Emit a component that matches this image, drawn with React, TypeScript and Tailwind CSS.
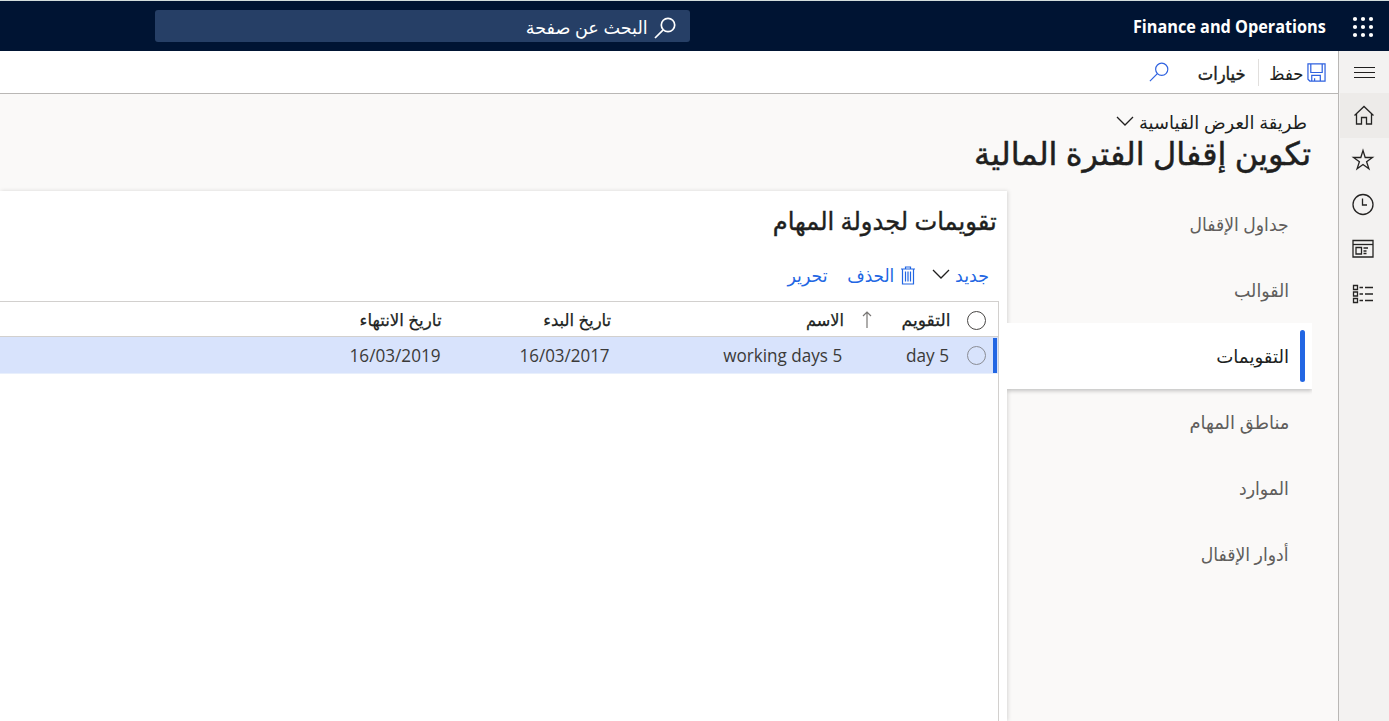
import React, { useLayoutEffect, useRef, useState } from 'react';

/* Single line label that is condensed or widened to fill the width of its box. */
function Label({ className = '', ltr = false, children }: { className?: string; ltr?: boolean; children: string }) {
  const box = useRef<HTMLSpanElement>(null);
  const text = useRef<HTMLSpanElement>(null);
  const [scale, setScale] = useState(1);
  useLayoutEffect(() => {
    if (box.current && text.current && text.current.offsetWidth) {
      setScale(box.current.offsetWidth / text.current.getBoundingClientRect().width);
    }
  }, []);
  return (
    <span ref={box} className={`flex shrink-0 whitespace-nowrap ${className}`}>
      <span ref={text} dir={ltr ? 'ltr' : 'rtl'} className="block shrink-0 origin-right" style={{ transform: `scaleX(${scale})` }}>
        {children}
      </span>
    </span>
  );
}

function SearchIcon({ className }: { className: string }) {
  return (
    <svg className={className} viewBox="0 0 22 22" fill="none" stroke="currentColor">
      <circle cx="14" cy="8" r="6.7" />
      <path d="M9.2 12.8 1 21" />
    </svg>
  );
}

function Chevron({ className }: { className: string }) {
  return (
    <svg className={className} viewBox="0 0 18 10" fill="none" stroke="currentColor" strokeWidth="1.3">
      <path d="M1 1 9 9l8-8" />
    </svg>
  );
}

function Waffle() {
  return (
    <svg className="mt-px h-[22px] w-[22px]" viewBox="0 0 22 22" fill="white">
      {[3, 11, 19].map((y) => [3, 11, 19].map((x) => <circle key={`${x}-${y}`} cx={x} cy={y} r="2.1" />))}
    </svg>
  );
}

const railIcons = [
  <path key="home" d="M2.5 12.500 12 3.500l9.500 9M4.500 11v10h5v-6.500h5V21h5V11" />,
  <path key="star" d="m12 2.500 2.200 7h7.300l-5.900 4.300 2.300 7L12 16.500l-5.900 4.300 2.300-7-5.900-4.300h7.300z" />,
  <g key="clock"><circle cx="12" cy="11.500" r="10" /><path d="M11.500 5.500V12H16" /></g>,
  <g key="workspace" transform="translate(0 -.500)"><path d="M2 4h20v16.500H2z" /><path d="M2 8h20" /><path d="M5 11h5.500v6.500H5zM12.500 11.500h4.500M12.500 14.500h3M12.500 17h3" /></g>,
  <g key="modules"><path d="M2.500 3.500h4v4h-4zM2.500 10h4v4h-4zM2.500 16.500h4v4h-4z" /><path d="M8.500 5.500h3.500M14 5.500h8M8.500 12h3.500M14 12h8M8.500 18.500h3.500M14 18.500h8" /></g>,
];

const sections = [
  { name: 'جداول الإقفال', width: 'w-[99px]' },
  { name: 'القوالب', width: 'w-[55px]' },
  { name: 'التقويمات', width: 'w-[73px]', active: true },
  { name: 'مناطق المهام', width: 'w-[100px]' },
  { name: 'الموارد', width: 'w-[50px]' },
  { name: 'أدوار الإقفال', width: 'w-[88px]' },
];

export default function App() {
  return (
    <div dir="rtl" className="flex h-[721px] w-[1389px] flex-col overflow-hidden border-t border-[#d3dedd] bg-[#faf9f8] font-['Noto_Sans','DejaVu_Sans',sans-serif] text-[#201f1e]">
      <header className="flex h-[50px] shrink-0 items-center bg-[#001433] pr-[15px] text-white">
        <Waffle />
        <Label ltr className="mr-[26px] w-[193px] font-['Open_Sans','Noto_Sans',sans-serif] text-lg font-bold">Finance and Operations</Label>
        <div className="mr-[443px] flex h-8 w-[535px] items-center rounded-[3px] bg-[#263f66] pr-[14px]">
          <SearchIcon className="mt-1 h-[22px] w-[22px] [stroke-width:1.7]" />
          <Label className="mr-[6px] mt-[3px] w-[122px] text-[18px]">البحث عن صفحة</Label>
        </div>
      </header>

      <div className="flex min-h-0 flex-1">
        <nav className="flex w-[51px] shrink-0 flex-col border-l border-[#b9b7b5] bg-[#f3f2f1]">
          <div className="flex h-[42px] flex-col items-center justify-center gap-1">
            <i className="h-px w-[21px] bg-[#201f1e]" />
            <i className="h-px w-[21px] bg-[#201f1e]" />
            <i className="h-px w-[21px] bg-[#201f1e]" />
          </div>
          {railIcons.map((icon, i) => (
            <div key={i} className={`flex shrink-0 justify-center pt-[10px] ${i === 0 ? 'ml-px h-[45px] bg-[#edebe9] pr-[2px]' : 'h-[44.6px] pr-[3px]'}`}>
              <svg className="h-6 w-6" viewBox="0 0 24 24" fill="none" stroke="#252423" strokeWidth="1.3">{icon}</svg>
            </div>
          ))}
        </nav>

        <main className="flex min-w-0 flex-1 flex-col">
          <div className="flex h-[43px] shrink-0 items-center border-b border-[#b9b7b5] bg-white pr-[12px]">
            <svg className="h-[19px] w-[19px]" viewBox="0 0 20 20" fill="none" stroke="#2f62e0" strokeWidth="1.3">
              <path d="M1 1h18v18H3l-2-2zM4 1v9h12V1M5 19v-6h9v6M8 19v-3" />
            </svg>
            <Label className="mr-1 mt-[3px] w-[34px] text-[18px]">حفظ</Label>
            <i className="mr-[10px] h-[27px] w-px bg-[#e1dfdd]" />
            <Label className="mr-3 mt-[3px] w-[48px] text-[18px] font-medium [-webkit-text-stroke:0.4px]">خيارات</Label>
            <SearchIcon className="mr-[29px] h-5 w-5 text-[#2f62e0] [stroke-width:1.3]" />
          </div>

          <div className="flex h-[97px] shrink-0 flex-col pr-[27px] pt-4">
            <div className="flex h-6 items-center pr-[4px]">
              <Label className="w-[168px] text-[18px] leading-[18px]">طريقة العرض القياسية</Label>
              <Chevron className="mb-[3px] mr-[5px] h-[10px] w-[18px]" />
            </div>
            <h1 className="flex h-[38px] items-center">
              <Label className="w-[337px] text-[32px] font-medium leading-8 [-webkit-text-stroke:0.5px]">تكوين إقفال الفترة المالية</Label>
            </h1>
          </div>

          <div className="flex min-h-0 flex-1">
            <aside className="flex w-[331px] shrink-0 flex-col pr-[26px]">
              {sections.map((s) => (
                <div key={s.name} className={`flex h-[66px] shrink-0 items-center ${s.active ? 'z-10 bg-white pr-[7px] text-[#201f1e] shadow-[0_2px_4px_rgba(0,0,0,0.22)] [clip-path:inset(0_0_-8px_0)]' : 'pr-[23px] text-[#605e5c]'}`}>
                  {s.active && <i className="ml-[11px] h-[52px] w-[5px] rounded-sm bg-[#2266e3]" />}
                  <Label className={`${s.width} text-[18px]`}>{s.name}</Label>
                </div>
              ))}
            </aside>

            <section className="flex min-w-0 flex-1 flex-col bg-white shadow-[1px_0_4px_rgba(0,0,0,0.14)]">
              <h2 className="flex h-[62px] shrink-0 items-center pb-[2px] pr-[10px]">
                <Label className="w-[224px] text-[25px] font-medium [-webkit-text-stroke:0.4px]">تقويمات لجدولة المهام</Label>
              </h2>
              <div className="flex h-12 shrink-0 items-center pb-[3px] pr-[18px] text-[#2266e3]">
                <Label className="w-[34px] text-[18px]">جديد</Label>
                <Chevron className="mb-[3px] mr-[5px] h-[10px] w-[18px] text-[#201f1e]" />
                <svg className="mb-px mr-[16px] h-[19px] w-4" viewBox="0 0 16 19" fill="none" stroke="currentColor" strokeWidth="1.2">
                  <path d="M1 3h14M5.500 3V1h5v2M2.500 3v15h11V3M5.500 5.500v10M8 5.500v10M10.500 5.500v10" />
                </svg>
                <Label className="mr-[6px] w-[47px] text-[18px]">الحذف</Label>
                <Label className="mr-[19px] w-[40px] text-[18px]">تحرير</Label>
              </div>
              <div className="mr-2 flex flex-1 flex-col border-r border-t border-[#d2d0ce]">
                <div className="flex h-[35px] shrink-0 items-center border-b border-[#d2d0ce] pr-3 pt-[2px]">
                  <i className="h-[19px] w-[19px] rounded-full border border-[#484644]" />
                  <Label className="mr-[17px] w-[49px] text-[17px] font-medium [-webkit-text-stroke:0.25px]">التقويم</Label>
                  <svg className="mr-[29px] h-[18px] w-[10px]" viewBox="0 0 10 18" fill="none" stroke="#797775" strokeWidth="1.2">
                    <path d="M5 17V1M1 5l4-4 4 4" />
                  </svg>
                  <Label className="mr-[18px] w-[38px] text-[17px] font-medium [-webkit-text-stroke:0.25px]">الاسم</Label>
                  <Label className="mr-[195px] w-[68px] text-[17px] font-medium [-webkit-text-stroke:0.25px]">تاريخ البدء</Label>
                  <Label className="mr-[101px] w-[82px] text-[17px] font-medium [-webkit-text-stroke:0.25px]">تاريخ الانتهاء</Label>
                </div>
                <div className="flex h-[37px] shrink-0 items-center border-b border-[#e8effc] bg-[#d8e3fc] pr-px font-['Open_Sans','Noto_Sans',sans-serif] text-[18px] text-[#3b3a39]">
                  <i className="h-[35px] w-1 bg-[#2266e3]" />
                  <i className="mr-[7px] h-[19px] w-[19px] rounded-full border-[1.5px] border-[#8a8c94]" />
                  <Label ltr className="mr-[18px] mt-px w-[43px]">day 5</Label>
                  <Label ltr className="mr-[64px] mt-px w-[119px]">working days 5</Label>
                  <Label ltr className="mr-[113px] mt-px w-[90px]">16/03/2017</Label>
                  <Label ltr className="mr-[79px] mt-px w-[91px]">16/03/2019</Label>
                </div>
              </div>
            </section>
          </div>
        </main>
      </div>
    </div>
  );
}
